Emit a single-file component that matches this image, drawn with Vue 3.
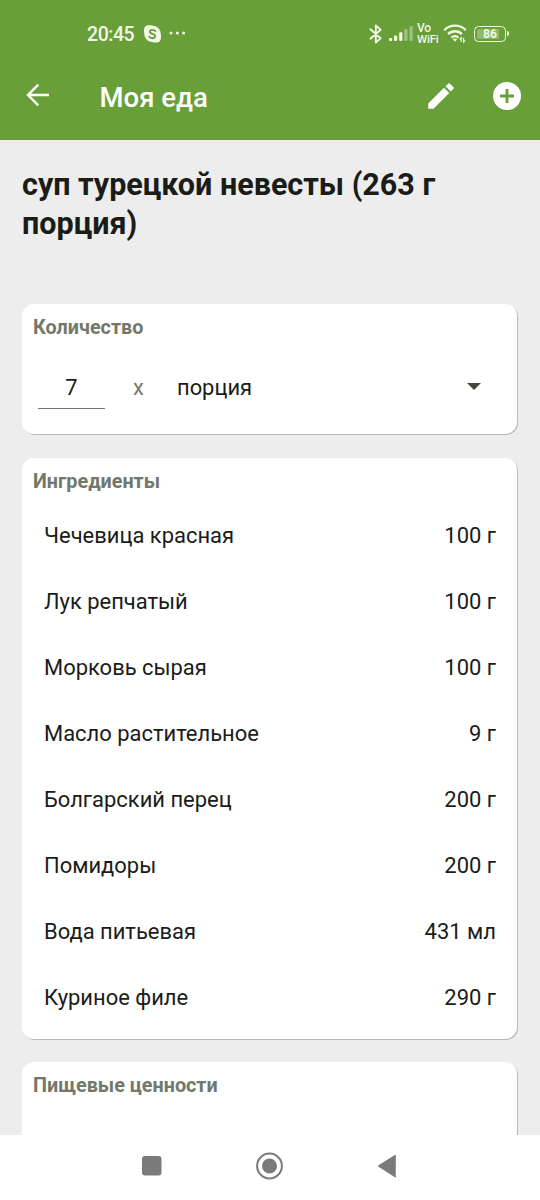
<script setup>
const ingredients = [
  { name: 'Чечевица красная', amount: '100 г' },
  { name: 'Лук репчатый', amount: '100 г' },
  { name: 'Морковь сырая', amount: '100 г' },
  { name: 'Масло растительное', amount: '9 г' },
  { name: 'Болгарский перец', amount: '200 г' },
  { name: 'Помидоры', amount: '200 г' },
  { name: 'Вода питьевая', amount: '431 мл' },
  { name: 'Куриное филе', amount: '290 г' },
]
</script>

<template>
  <div class="screen">
    <header class="top">
      <div class="status">
        <span class="clock">20:45</span>
        <svg class="skype" width="17" height="18" viewBox="0 0 17 18">
          <rect x="0" y="0.2" width="11" height="11" rx="4.5" />
          <rect x="6" y="6.6" width="11" height="11" rx="4.5" />
          <circle cx="8.5" cy="8.9" r="8.2" />
          <path d="M11.2 6.2C10.5 4.5 5.9 4.2 5.9 6.8c0 2.6 5.2 1.5 5.2 4.2 0 3-4.9 2.6-5.7.7" />
        </svg>
        <svg class="more" width="17" height="4" viewBox="0 0 17 4">
          <circle cx="2" cy="2" r="1.5" /><circle cx="8.3" cy="2" r="1.5" /><circle cx="14.6" cy="2" r="1.5" />
        </svg>
        <svg class="bluetooth" width="14" height="20" viewBox="0 0 14 20">
          <path d="M1.4 5.3 11.6 14.2 6.8 18.6V1.4l4.8 4.4L1.4 14.7" />
        </svg>
        <svg class="signal" width="24" height="16" viewBox="0 0 24 16">
          <rect x="0" y="12" width="3.2" height="3" rx="1" />
          <rect x="5" y="9.5" width="3.2" height="5.5" rx="1" />
          <rect x="10.2" y="6.3" width="3.2" height="8.7" rx="1" />
          <rect class="dim" x="15.3" y="3" width="3.2" height="12" rx="1" />
          <rect class="dim" x="20.5" y="0" width="3.2" height="15" rx="1" />
        </svg>
        <span class="vowifi"><span class="vo">Vo</span><span>WiFi</span></span>
        <svg class="wifi" width="24" height="19" viewBox="0 0 24 19">
          <path class="arc" d="M1.2 6.2C7.2.2 16.8.2 22.8 6.2M5 10.1c3.9-3.8 10.1-3.8 14 0M8.5 13.6c2-1.8 5-1.8 7 0" />
          <path class="dot" d="M9.8 15.2c1.3-1.1 3.1-1.1 4.4 0L12 17.8z" />
          <path class="traffic" d="M18.2 18v-4.2l-1.5 1.6M20.6 13.8v4.2l1.6-1.6" />
        </svg>
        <span class="battery"><span class="level">86</span><span class="tip"></span></span>
      </div>
      <div class="appbar">
        <svg class="back" width="24" height="24" viewBox="0 0 24 24"><path d="M23 12H2M12.3 1.7 2 12l10.3 10.3" /></svg>
        <h1>Моя еда</h1>
        <svg class="edit" width="34" height="34" viewBox="0 0 24 24">
          <path d="M3 17.25V21h3.75L17.81 9.94l-3.75-3.75L3 17.25zM20.71 7.04a1 1 0 0 0 0-1.41l-2.34-2.34a1 1 0 0 0-1.41 0l-1.83 1.83 3.75 3.75 1.83-1.83z" />
        </svg>
        <svg class="add" width="28" height="28" viewBox="0 0 28 28"><circle cx="14" cy="14" r="14" /><path d="M14 7v14M7 14h14" /></svg>
      </div>
    </header>

    <main>
      <h2>суп турецкой невесты (263 г порция)</h2>
      <section class="card quantity">
        <h3>Количество</h3>
        <div class="serving">
          <span class="count">7</span>
          <span class="times">x</span>
          <span class="unit">порция</span>
          <svg class="caret" width="14" height="7" viewBox="0 0 14 7"><path d="M0 0h14L7 7z" /></svg>
        </div>
      </section>
      <section class="card ingredients">
        <h3>Ингредиенты</h3>
        <ul>
          <li v-for="item in ingredients" :key="item.name">
            <span>{{ item.name }}</span><span>{{ item.amount }}</span>
          </li>
        </ul>
      </section>
      <section class="card nutrition">
        <h3>Пищевые ценности</h3>
      </section>
    </main>

    <nav>
      <svg width="20" height="20" viewBox="0 0 20 20"><rect width="19.5" height="19.5" rx="3" /></svg>
      <svg width="28" height="28" viewBox="0 0 28 28"><circle class="ring" cx="13.5" cy="14" r="12.4" /><circle cx="13.5" cy="14" r="7.5" /></svg>
      <svg width="20" height="24" viewBox="0 0 20 24"><path d="M17.8 1.2v21.6q0 .9-.9.4L.5 12.8q-1-.8 0-1.6L16.8.9q1-.5 1 .6z" /></svg>
    </nav>
  </div>
</template>

<style>
body { margin: 0; }
</style>

<style scoped>
.screen {
  width: 540px;
  height: 1200px;
  display: flex;
  flex-direction: column;
  overflow: hidden;
  background: #ededed;
  color: #1a1c18;
  font-family: Roboto, "Noto Sans", sans-serif;
}
h1, h2, h3, ul { margin: 0; padding: 0; }
svg { display: block; flex: none; overflow: visible; }
.top { height: 140px; flex: none; background: #689f38; color: #fff; }
.status {
  height: 67px;
  display: flex;
  align-items: center;
  padding-left: 87px;
  box-sizing: border-box;
  color: #f1f8e6;
  fill: #f1f8e6;
}
.clock { width: 57px; font-size: 19.5px; line-height: 24px; font-weight: 500; letter-spacing: -0.45px; padding-top: 2px; box-sizing: border-box; }
.skype path { fill: none; stroke: #689f38; stroke-width: 1.9; stroke-linecap: round; }
.more { margin: -1px 0 0 8px; }
.bluetooth { margin-left: 183px; fill: none; stroke: #f1f8e6; stroke-width: 1.9; stroke-linejoin: round; stroke-linecap: round; }
.signal { margin: 1px 0 0 6px; }
.dim { opacity: 0.4; }
.vowifi { display: flex; flex-direction: column; width: 22px; margin-left: 4px; font-size: 11.5px; font-weight: 500; line-height: 10.5px; letter-spacing: -0.2px; }
.vo { font-size: 12px; }
.wifi { margin-left: 4px; }
.arc { fill: none; stroke: #f1f8e6; stroke-width: 2.3; }
.traffic { fill: none; stroke: #f1f8e6; stroke-width: 1.2; }
.battery { display: flex; align-items: center; margin-left: 7px; }
.level {
  width: 32px;
  height: 16px;
  box-sizing: border-box;
  border: 1.5px solid #f1f8e6;
  border-radius: 4.5px;
  background: linear-gradient(90deg, #8fb868 84%, transparent 84%) content-box;
  padding: 2px;
  font-size: 12px;
  font-weight: 700;
  line-height: 11px;
  text-align: center;
}
.tip { width: 1.5px; height: 5px; margin-left: 1px; border-radius: 0 2px 2px 0; background: #f1f8e6; }
.appbar { height: 58px; display: flex; align-items: center; padding-left: 26px; fill: #fff; }
.back { margin-top: -2px; fill: none; stroke: #fff; stroke-width: 2.4; }
h1 { width: 324.5px; margin-left: 49.5px; padding-top: 4px; font-size: 27.5px; font-weight: 500; line-height: 32px; }
.add { margin-left: 35px; }
.add path { fill: none; stroke: #689f38; stroke-width: 2.8; }
main { flex: 1; min-height: 0; overflow: hidden; padding: 26px 22px 0; }
h2 { height: 138px; font-size: 30.5px; line-height: 38.5px; font-weight: 700; }
.card {
  width: 495px;
  box-sizing: border-box;
  padding: 10px 11px 0;
  border-radius: 12px;
  background: #fff;
  box-shadow: 1px 1px 0 #b8b8b8;
}
h3 { font-size: 19.8px; line-height: 28px; font-weight: 700; color: #72796b; }
.quantity { height: 130px; margin-bottom: 24px; }
.ingredients { height: 581px; margin-bottom: 23px; }
.nutrition { height: 200px; }
.serving { display: flex; align-items: center; height: 42px; margin-top: 24px; padding-left: 5px; font-size: 21.9px; }
.count { width: 67px; height: 43px; line-height: 44px; text-align: center; border-bottom: 1.5px solid #72776e; box-sizing: border-box; }
.times { width: 44px; margin-left: 28px; color: #72796b; }
.caret { margin: -1px 0 0 215px; fill: #43483f; }
.serving .unit { width: 75px; }
ul { list-style: none; padding: 6px 10px 0 11px; }
li { height: 66px; display: flex; align-items: center; justify-content: space-between; font-size: 21.95px; }
nav { height: 65px; flex: none; display: flex; align-items: center; background: #fff; fill: #7a7a7a; padding: 0 0 3px 142px; box-sizing: border-box; gap: 94px; }
.ring { fill: none; stroke: #7a7a7a; stroke-width: 2; }
</style>
